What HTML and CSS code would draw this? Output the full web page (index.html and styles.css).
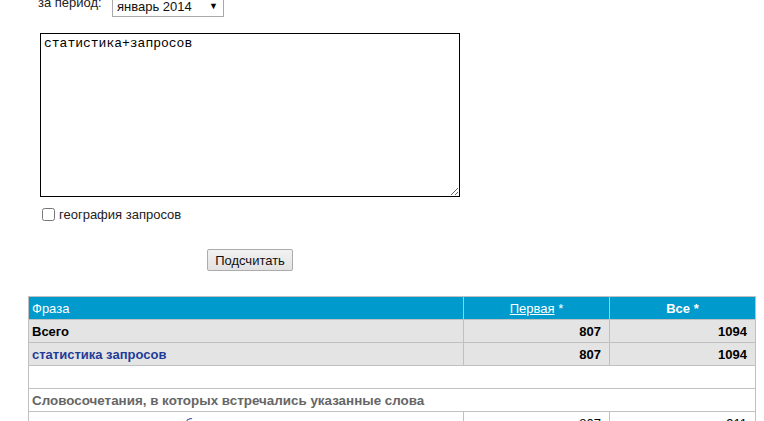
FILE: index.html
```html
<!DOCTYPE html>
<html lang="ru">
<head>
<meta charset="utf-8">
<link rel="stylesheet" href="styles.css">
</head>
<body>
<form class="form">
  <div class="period-row">
    <span class="period-label">за период:</span>
    <span class="select-wrap">
      <select class="period-select"><option>январь 2014</option></select>
      <span class="select-arrow">▼</span>
    </span>
  </div>
  <textarea class="query">статистика+запросов</textarea>
  <label class="geo"><input type="checkbox" class="geo-box"><span>география запросов</span></label>
  <div class="submit-row"><button type="button" class="submit">Подсчитать</button></div>
</form>
<table class="stats">
  <thead>
    <tr class="head">
      <th class="col-phrase">Фраза</th>
      <th class="col-num"><a href="#" class="head-link">Первая</a> *</th>
      <th class="col-num col-all">Все *</th>
    </tr>
  </thead>
  <tbody>
    <tr class="grey total">
      <td>Всего</td>
      <td class="num">807</td>
      <td class="num">1094</td>
    </tr>
    <tr class="grey main">
      <td><a href="#" class="phrase-main">статистика запросов</a></td>
      <td class="num">807</td>
      <td class="num">1094</td>
    </tr>
    <tr class="empty"><td colspan="3"></td></tr>
    <tr class="section"><td colspan="3">Словосочетания, в которых встречались указанные слова</td></tr>
    <tr class="item">
      <td><a href="#" class="phrase">статистика запросов по областям</a></td>
      <td class="num">807</td>
      <td class="num">911</td>
    </tr>
  </tbody>
</table>
</body>
</html>
```
FILE: styles.css
```css
html, body {
  margin: 0;
  padding: 0;
  background: #fff;
  font-family: "Liberation Sans", Arial, sans-serif;
  font-size: 13px;
  color: #222;
  overflow: hidden;
}

.form {
  margin-top: -4px;
  display: flex;
  flex-direction: column;
  align-items: flex-start;
}

.period-row {
  display: flex;
  align-items: flex-start;
  padding-left: 38px;
  height: 20px;
}

.period-label {
  width: 74px;
  line-height: 14px;
  color: #222;
}

.select-wrap {
  position: relative;
  display: inline-block;
}

.period-select {
  appearance: none;
  -webkit-appearance: none;
  width: 112px;
  height: 21px;
  margin: 0;
  padding: 0 0 0 4px;
  border: 1px solid #a9a9a9;
  border-radius: 0;
  background: #fff;
  font-family: "Liberation Sans", Arial, sans-serif;
  font-size: 13px;
  color: #111;
}

.select-arrow {
  position: absolute;
  right: 6px;
  top: 5px;
  font-size: 9px;
  line-height: 10px;
  color: #000;
  pointer-events: none;
}

.query {
  margin: 17px 0 0 40px;
  width: 420px;
  height: 164px;
  box-sizing: border-box;
  border: 1px solid #000;
  padding: 2px 3px;
  font-family: "Liberation Mono", "Courier New", monospace;
  font-size: 13px;
  line-height: 15px;
  color: #000;
}

.geo {
  display: flex;
  align-items: center;
  margin: 10px 0 0 41px;
  height: 14px;
  color: #222;
}

.geo-box {
  width: 13px;
  height: 13px;
  margin: 0 4px 0 1px;
}

.submit-row {
  margin: 28px 0 0 207px;
}

.submit {
  width: 86px;
  height: 22px;
  padding: 0;
  border: 1px solid #acacac;
  border-radius: 2px;
  background: linear-gradient(#f2f2f2, #e2e2e2);
  font-family: "Liberation Sans", Arial, sans-serif;
  font-size: 13px;
  color: #111;
}

.stats {
  margin: 25px 0 0 28px;
  width: 728px;
  border-collapse: collapse;
  border: 1px solid #c0c0c0;
}

.stats th, .stats td {
  border: 1px solid #c0c0c0;
  height: 23px;
  padding: 0 3px;
  box-sizing: border-box;
  font-size: 13px;
}

.head th {
  background: #009acd;
  color: #fff;
  font-weight: normal;
}

.head .col-phrase {
  text-align: left;
}

.head .col-num {
  width: 146px;
  text-align: center;
}

.head .col-all {
  font-weight: bold;
}

.head-link {
  color: #fff;
  text-decoration: underline;
}

.grey td {
  background: #e4e4e4;
  font-weight: bold;
  color: #000;
}

.num {
  text-align: right;
  padding-right: 8px !important;
}

.phrase-main {
  color: #1f3c99;
  text-decoration: none;
  font-weight: bold;
}

.section td {
  font-weight: bold;
  font-size: 13.4px;
  color: #666;
}

.item td {
  color: #000;
}

.phrase {
  color: #1f3c99;
  text-decoration: none;
}
```
